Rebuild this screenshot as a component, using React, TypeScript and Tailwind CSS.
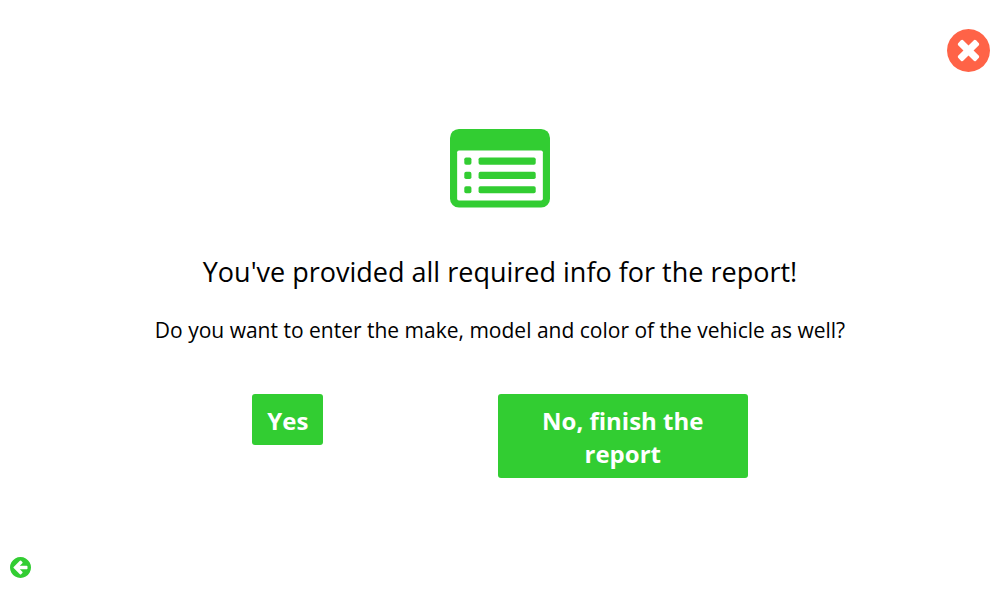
import React from "react";

const CIRCLE =
  "M1664 896q0 209-103 385.5t-279.5 279.5-385.5 103-385.5-103-279.5-279.5-103-385.5 103-385.5 279.5-279.5 385.5-103 385.5 103 279.5 279.5 103 385.5z";

function CloseIcon() {
  return (
    <svg viewBox="128 128 1536 1536" className="block size-[43px]" fill="currentColor" fillRule="evenodd" aria-hidden="true">
      <path
        d={
          CIRCLE +
          "M1277 1122q0-26-19-45l-181-181 181-181q19-19 19-45 0-27-19-46l-90-90q-19-18-46-18-26 0-45 19l-181 181-181-181q-19-19-45-19-27 0-46 18l-90 90q-19 19-19 46 0 26 19 45l181 181-181 181q-19 19-19 45 0 27 19 46l90 90q19 18 46 18 26 0 45-19l181-181 181 181q19 19 45 19 27 0 46-18l90-90q19-19 19-46z"
        }
      />
    </svg>
  );
}

function BackIcon() {
  return (
    <svg viewBox="128 128 1536 1536" className="block size-[21px]" fill="currentColor" fillRule="evenodd" aria-hidden="true">
      <path
        d={
          CIRCLE +
          "M1408 960v-128q0-26-19-45t-45-19h-502l189-189q19-19 19-45t-19-45l-91-91q-18-18-45-18t-45 18l-362 362-91 91q-18 18-18 45t18 45l91 91 362 362q18 18 45 18t45-18l91-91q18-18 18-45t-18-45l-189-189h502q26 0 45-19t19-45z"
        }
      />
    </svg>
  );
}

function ListIcon() {
  return (
    <svg viewBox="0 0 1792 1408" className="block w-[100px]" aria-hidden="true">
      <rect width="1792" height="1408" rx="160" fill="#32cd32" />
      <rect x="128" y="384" width="1536" height="896" rx="32" fill="#fff" />
      {[512, 768, 1024].map((y) => (
        <g key={y} fill="#32cd32">
          <rect x="256" y={y} width="128" height="128" rx="32" />
          <rect x="512" y={y} width="1024" height="128" rx="32" />
        </g>
      ))}
    </svg>
  );
}

export default function App() {
  return (
    <div className="flex min-h-screen flex-col bg-white font-['Segoe_UI','Open_Sans','Noto_Sans',sans-serif] text-black">
      <header className="flex justify-end px-[10px] pt-[29px]">
        <button type="button" aria-label="Close" className="rounded-full text-[#ff6347]">
          <CloseIcon />
        </button>
      </header>
      <main className="flex flex-1 flex-col items-center pt-[57px] text-center">
        <ListIcon />
        <h1 className="mt-11 text-[27px] leading-10">You've provided all required info for the report!</h1>
        <p className="mt-[22px] text-[21px] leading-8">
          Do you want to enter the make, model and color of the vehicle as well?
        </p>
        <div className="mt-12 flex w-[67%] items-start justify-around text-2xl font-bold text-white">
          <button type="button" className="rounded-[3px] bg-[#32cd32] px-[15px] pt-[10px] pb-2 leading-[33px]">
            Yes
          </button>
          <button type="button" className="w-[250px] rounded-[3px] bg-[#32cd32] px-8 pt-[10px] pb-2 leading-[33px]">
            No, finish the report
          </button>
        </div>
      </main>
      <footer className="flex px-[10px] pb-[27px]">
        <button type="button" aria-label="Back" className="rounded-full text-[#32cd32]">
          <BackIcon />
        </button>
      </footer>
    </div>
  );
}
